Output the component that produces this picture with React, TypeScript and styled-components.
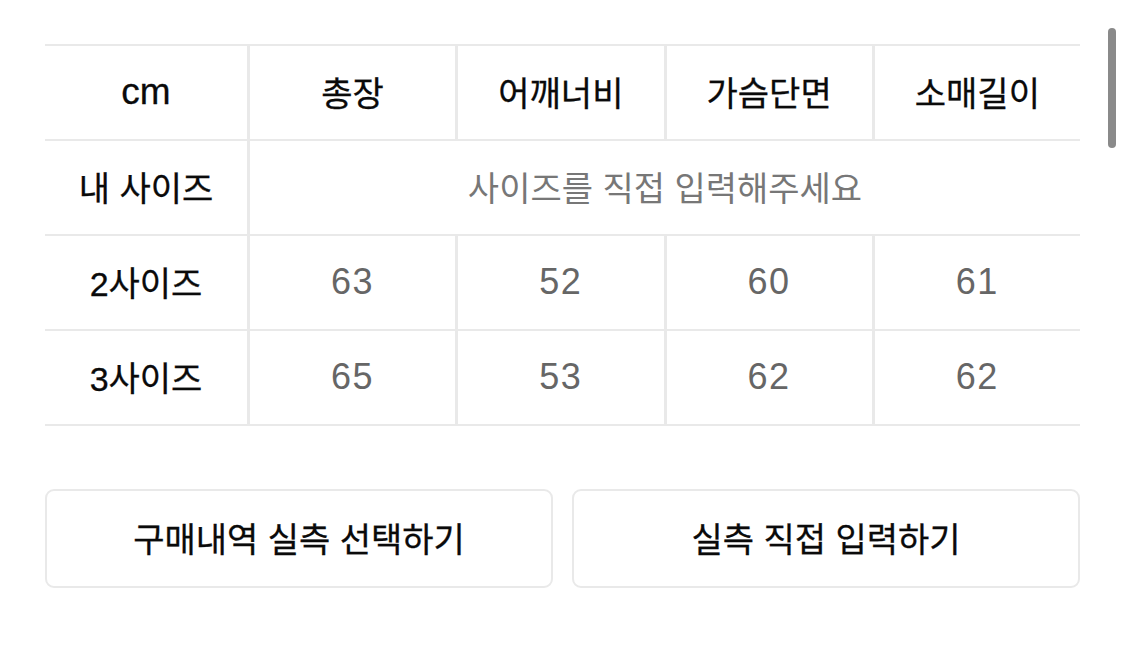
import React from "react";
import styled, { createGlobalStyle } from "styled-components";

const Global = createGlobalStyle`
  html, body { margin: 0; padding: 0; background: #fff; }
  body { font-family: "Liberation Sans", "Noto Sans CJK KR", sans-serif; }
`;

const Page = styled.div`
  width: 1125px;
  height: 658px;
  box-sizing: border-box;
  padding: 44px 45px 0 45px;
  position: relative;
  overflow: hidden;
`;

const Table = styled.div`
  display: grid;
  grid-template-columns: 202px repeat(4, 1fr);
  border-top: 2px solid #e9e9e9;
`;

const Cell = styled.div<{ $head?: boolean; $muted?: boolean; $span?: number; $first?: boolean }>`
  display: flex;
  align-items: center;
  justify-content: center;
  padding-bottom: 2px;
  box-sizing: border-box;
  height: 95px;
  border-bottom: 2px solid #e9e9e9;
  border-left: ${(p) => (p.$first ? "none" : "3px solid #e9e9e9")};
  grid-column: ${(p) => (p.$span ? `span ${p.$span}` : "auto")};
  font-size: 34px;
  color: ${(p) => (p.$head ? "#0a0a0a" : p.$muted ? "#777" : "#666")};
  font-weight: 400;
  -webkit-text-stroke: ${(p) => (p.$head ? "0.3px #0a0a0a" : "0")};
`;

const Unit = styled.span`
  font-size: 37px;
`;

const Num = styled.span`
  font-size: 36px;
  letter-spacing: 1.5px;
`;

const Buttons = styled.div`
  display: grid;
  grid-template-columns: 1fr 1fr;
  gap: 19px;
  margin-top: 63px;
`;

const Button = styled.button`
  height: 99px;
  border: 2px solid #e9e9e9;
  border-radius: 9px;
  background: #fff;
  font-family: "Liberation Sans", "Noto Sans CJK KR", sans-serif;
  font-size: 34px;
  font-weight: 400;
  color: #0a0a0a;
  -webkit-text-stroke: 0.3px #0a0a0a;
  padding: 0 0 2px;
`;

const Scrollbar = styled.div`
  position: absolute;
  right: 9px;
  top: 28px;
  width: 8px;
  height: 120px;
  border-radius: 4px;
  background: #8a8a8a;
`;

const headers = ["총장", "어깨너비", "가슴단면", "소매길이"];
const rows = [
  { label: "2사이즈", values: ["63", "52", "60", "61"] },
  { label: "3사이즈", values: ["65", "53", "62", "62"] },
];

export default function App() {
  return (
    <>
      <Global />
      <Page>
        <Table>
          <Cell $head $first><Unit>cm</Unit></Cell>
          {headers.map((h) => (
            <Cell $head key={h}>{h}</Cell>
          ))}
          <Cell $head $first>내 사이즈</Cell>
          <Cell $muted $span={4}>사이즈를 직접 입력해주세요</Cell>
          {rows.map((r) => (
            <React.Fragment key={r.label}>
              <Cell $head $first>{r.label}</Cell>
              {r.values.map((v, i) => (
                <Cell key={i}><Num>{v}</Num></Cell>
              ))}
            </React.Fragment>
          ))}
        </Table>
        <Buttons>
          <Button>구매내역 실측 선택하기</Button>
          <Button>실측 직접 입력하기</Button>
        </Buttons>
        <Scrollbar />
      </Page>
    </>
  );
}
